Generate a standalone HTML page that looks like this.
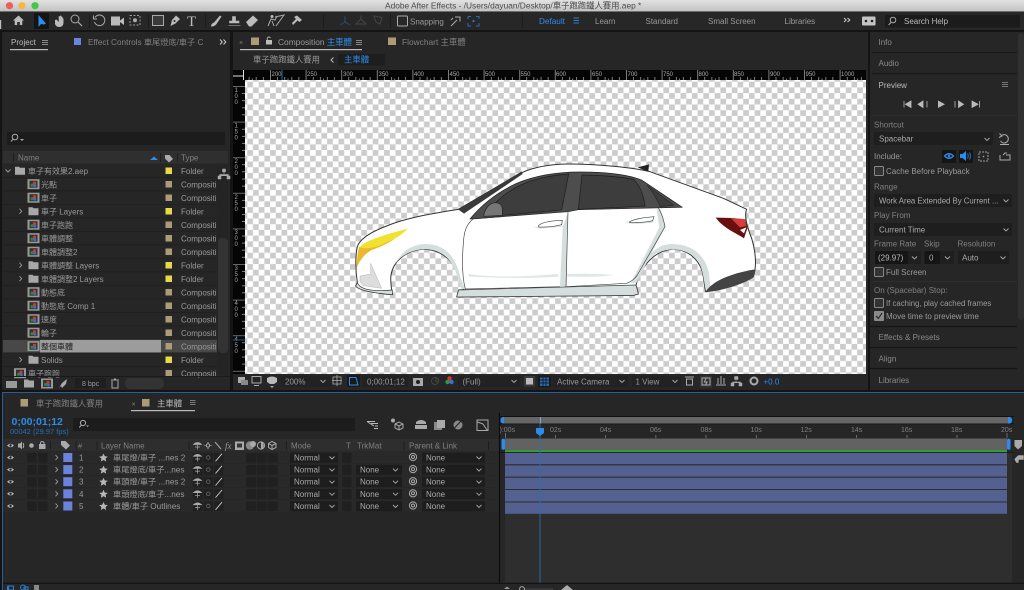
<!DOCTYPE html>
<html><head><meta charset="utf-8"><title>Adobe After Effects</title>
<style>
html,body{margin:0;padding:0;width:1024px;height:590px;overflow:hidden;background:#141414}
svg{display:block;position:absolute;left:0;top:0;filter:blur(.3px)}
text{font-family:"Liberation Sans","Noto Sans CJK TC",sans-serif;font-size:8px;fill:#999}
.b{fill:#2d8ceb}.l{fill:#bbb}.d{fill:#808080}.s{font-size:6px;fill:#aaa}
.i{fill:none;stroke:#aaa;stroke-width:1}.f{fill:#aaa}
.c{fill:none;stroke:#999;stroke-width:.9}
</style></head><body>
<svg width="1024" height="590" viewBox="0 0 1024 590" xmlns="http://www.w3.org/2000/svg">
<defs>
<linearGradient id="tb" x1="0" y1="0" x2="0" y2="1"><stop offset="0" stop-color="#e2e2e2"/><stop offset="1" stop-color="#c2c2c2"/></linearGradient>
<pattern id="chk" x="247.3" y="81.7" width="11.4" height="11.4" patternUnits="userSpaceOnUse"><rect width="11.4" height="11.4" fill="#fff"/><rect width="5.7" height="5.7" fill="#ccc"/><rect x="5.7" y="5.7" width="5.7" height="5.7" fill="#ccc"/></pattern>
<pattern id="rt" x="270" y="70" width="35.6" height="10" patternUnits="userSpaceOnUse"><path d="M.5 0V10M7.6 7V10M14.7 7V10M21.8 7V10M28.9 7V10M18 8.5V10" stroke="#ccc" stroke-width=".6" fill="none"/></pattern>
<pattern id="rl" x="233" y="86" width="12" height="35.6" patternUnits="userSpaceOnUse"><path d="M0 .5H12M9 7.6H12M9 14.7H12M9 21.8H12M9 28.9H12" stroke="#ccc" stroke-width=".6" fill="none"/></pattern>
<g id="cmp"><rect x="0" y="-5" width="12" height="10" fill="#999"/><rect x="2" y="-3.5" width="8" height="7" fill="#333"/><circle cx="7" cy="-1" r="1.6" fill="#d33"/><circle cx="4.6" cy="1" r="1.6" fill="#2a8a3a"/><circle cx="7.4" cy="1.6" r="1.4" fill="#3a6fd8"/></g>
<path id="fld" d="M0 -4H4L5 -3H10V4H0Z" fill="#a8a8a8"/>
<path id="ch" d="M-2.5 -1L0 1.5L2.5 -1" fill="none" stroke="#aaa" stroke-width=".9"/>
<path id="tw" d="M-1 -2.5L1.2 0L-1 2.5" fill="none" stroke="#999" stroke-width=".9"/>
<g id="eye"><path d="M-3.5 0Q0 -3.5 3.5 0Q0 3.5 -3.5 0Z" fill="#bbb"/><circle r="1.2" fill="#222"/></g>
<g id="row">
<rect x="3" y="-6" width="496" height="11.6" fill="#292929"/>
<use href="#eye" x="10.5" y="0"/>
<rect x="27" y="-4.5" width="9.5" height="9.5" fill="#202020"/><rect x="38" y="-4.5" width="9.5" height="9.5" fill="#202020"/>
<use href="#tw" x="56.5" y="0"/>
<rect x="63.3" y="-4.5" width="9" height="9" fill="#6b83dc"/>
<path d="M103.5 -4L104.8 -1.2L107.8 -.9L105.5 1.1L106.2 4L103.5 2.5L100.8 4L101.5 1.1L99.2 -.9L102.2 -1.2Z" fill="#b8b8b8"/>
<rect x="193" y="-4.5" width="9.5" height="9.5" fill="#202020"/><rect x="203.5" y="-4.5" width="9.5" height="9.5" fill="#202020"/><rect x="214" y="-4.5" width="9.5" height="9.5" fill="#202020"/>
<path d="M193.5 -1.2Q197.5 -5 201.5 -1.2ZM197.5 -1V4M195 1.5H200" fill="#aaa" stroke="#aaa" stroke-width=".7"/>
<circle cx="208.3" cy="0" r="1.8" fill="none" stroke="#666" stroke-width=".8"/>
<path d="M215.5 3.8L222 -3.8" stroke="#ccc" stroke-width=".9"/>
<rect x="246" y="-4.5" width="10" height="9.5" fill="#202020"/><rect x="256.8" y="-4.5" width="10" height="9.5" fill="#202020"/><rect x="267.6" y="-4.5" width="10" height="9.5" fill="#202020"/>
<rect x="290" y="-4.8" width="48" height="10" fill="#1d1d1d"/><use href="#ch" x="332" y="0"/>
<rect x="342" y="-4.8" width="9.5" height="10" fill="#202020"/>
<circle cx="413" cy="-.5" r="3.6" class="i"/><circle cx="413" cy="-.5" r="1.5" class="i"/>
<rect x="422" y="-4.8" width="63" height="10" fill="#1d1d1d"/><use href="#ch" x="479" y="0"/>
</g>
<g id="tm"><rect x="356" y="-4.8" width="46" height="10" fill="#1d1d1d"/><use href="#ch" x="395.5" y="0"/></g>
<g id="prow"><path d="M3 6.7H217" stroke="#1e1e1e" stroke-width=".7"/></g>
</defs>

<!-- panels -->
<rect width="1024" height="590" fill="#141414"/>
<rect width="1024" height="11.5" fill="url(#tb)"/>
<circle cx="9.5" cy="5.7" r="3.6" fill="#ee5f57"/><circle cx="22" cy="5.7" r="3.6" fill="#f5b83e"/><circle cx="35" cy="5.7" r="3.6" fill="#3ec949"/>
<text x="385" y="8.5" style="fill:#4a4a4a;font-size:8.35px">Adobe After Effects - /Users/dayuan/Desktop/車子跑跑鐵人賽用.aep *</text>

<rect y="12" width="1024" height="18" fill="#272727"/>
<rect x="2" y="32" width="228" height="358" fill="#262626"/>
<rect x="233" y="32" width="635" height="358" fill="#262626"/>
<rect x="870" y="32" width="154" height="358" fill="#262626"/>
<rect x="1018" y="33" width="6" height="287" rx="3" fill="#303030"/>
<rect x="2" y="392" width="1022" height="198" fill="#262626"/>
<path d="M2.5 590V392.5H1024" fill="none" stroke="#245f98" stroke-width="1"/>
<rect x="0" y="20" width="1.2" height="9" fill="#bbb"/>

<!-- toolbar -->
<path d="M13 20.5L18.5 15.5L24 20.5H22.3V25H19.8V22H17.2V25H14.7V20.5Z" fill="#bbb"/>
<rect x="34" y="13" width="15" height="16" fill="#141414"/>
<path d="M38.5 15V27L41 24L44 24.5L46 23.5Z" fill="#2d8ceb"/>
<path d="M55 20V24Q56 27 59.5 27Q63 27 63.5 23V18.5L62.5 18.3V21.5V16.8L61.3 16.6V21V15.8L60 15.6V21V16.2L58.7 16.2V22L56.5 19.5Z" fill="#bbb"/>
<circle cx="75" cy="19" r="4" class="i"/><path d="M78 22L82 26" stroke="#aaa" stroke-width="1.2"/>
<path d="M95 17.5A5.3 5.3 0 1 1 94.5 22M93.5 15.5V19H97" class="i"/>
<path d="M111 17H120V26H111Z" fill="#bbb" transform="translate(0,-.5)"/><path d="M120 20.5L124 17.5V25L120 22Z" fill="#bbb"/>
<rect x="130" y="15.5" width="10" height="9.5" fill="none" stroke="#999" stroke-dasharray="2 1.5"/><circle cx="135" cy="20.2" r="2" fill="#aaa"/>
<rect x="152.5" y="15.5" width="11" height="10" fill="#3a3a3a" stroke="#aaa"/>
<path d="M170.5 26L172 20L176 15.5L180 19L175.5 23.5Z" fill="#bbb"/><circle cx="174.5" cy="21" r="1" fill="#222"/>
<text x="187" y="26" style="font-family:'Liberation Serif',serif;font-size:15px;fill:#bbb">T</text>
<path d="M211 26.5Q211 23.5 214 22.5L220 15.5L221.5 16.5L216.5 24Q215 26.5 211 26.5Z" fill="#bbb"/>
<path d="M232.5 16.5H235.5V21H239V23H229.5V21H232.5ZM228.5 25.5H240.5" fill="#bbb" stroke="#bbb" stroke-width=".6"/>
<path d="M246 22L253 15.5L258 20L251.5 26.5H249Z" fill="#bbb"/>
<circle cx="272" cy="16.5" r="1.5" fill="#bbb"/><path d="M268 26L271 19L275 20L277 16M272 21L274 26M275 17L284 15L276 26" class="i"/>
<path d="M292 23L296 19L294 17L297 15.5L302 20L299.5 22L297.5 20.5L293 25Z" fill="#bbb"/>
<path d="M345 22V16.5M345 22L340 25M345 22L350 25" stroke="#2f4f70" stroke-width="1" fill="none"/>
<path d="M361 15.5V19M361 19L356 24H366L361 19" stroke="#444" fill="none"/>
<path d="M374 16L382 17.5L380 24L376 22Z" stroke="#444" fill="none"/>
<rect x="397.5" y="16" width="10" height="10" rx="1" fill="none" stroke="#aaa"/>
<text x="410" y="24.3">Snapping</text>
<path d="M451 26L457 20M455 17H460V21.5M453 18L451 20" class="i"/>
<path d="M468 16.5H471M476 16.5H479V19M479 23V26H476M471 26H468V23M468 19V16.5" fill="none" stroke="#2a6fb0"/><circle cx="473.5" cy="21" r="1.2" fill="#2a6fb0"/>
<path d="M89.5 14V28M148.5 14V28M205.5 14V28M323.5 14V28M390.5 14V28M522.5 14V28" stroke="#1c1c1c"/>
<text x="539" y="24" class="b" style="font-size:8.2px">Default</text>
<path d="M573.5 18H579M573.5 20.5H579M573.5 23H579" stroke="#2d7fd0"/>
<text x="595" y="24">Learn</text><text x="645.5" y="24">Standard</text><text x="708" y="24">Small Screen</text><text x="784.5" y="24">Libraries</text>
<path d="M844 18L846.3 20L844 22M847.5 18L849.8 20L847.5 22" class="i" style="stroke:#ccc"/>
<rect x="862" y="16.5" width="13.5" height="9" rx="1" fill="#c4c4c4"/><circle cx="866" cy="21" r="1.3" fill="#222"/><circle cx="872" cy="21" r="1.3" fill="#222"/>
<rect x="885" y="15" width="135" height="12.5" fill="#1b1b1b"/>
<circle cx="893" cy="20" r="2.8" class="i"/><path d="M891 22.5L888.5 25" class="i"/>
<text x="904" y="24" class="l">Search Help</text>

<!-- project tabs -->
<text x="11" y="45" class="l">Project</text>
<rect x="10" y="49" width="38" height="1.2" fill="#bbb"/>
<path d="M42 40.5H48M42 42.5H48M42 44.5H48" stroke="#aaa" stroke-width=".8"/>
<rect x="74" y="38" width="7" height="7" fill="#6b83dc"/>
<text x="88" y="45" class="d" style="font-size:8.2px">Effect Controls 車尾燈底/車子 C</text>
<path d="M220 39.5L222.3 42L220 44.5M223.5 39.5L225.8 42L223.5 44.5" fill="none" stroke="#ccc"/>

<rect x="7" y="132" width="218" height="13" fill="#1c1c1c"/>
<circle cx="15" cy="137" r="2.8" class="i"/><path d="M13 139.3L11 141.5" class="i"/><path d="M20 139H24L22 141Z" class="f"/>
<rect x="3" y="151" width="225" height="12.5" fill="#2f2f2f"/>
<path d="M13.5 153V162M160.5 153V162M177.5 153V162" stroke="#1e1e1e"/>
<text x="18" y="160.5" class="d">Name</text><path d="M150 160H158L154 156.5Z" fill="#2d8ceb"/>
<path d="M165 155H169.5L173 159L169 162.5L165 158.5Z" fill="#aaa"/><text x="181" y="160.5" class="d">Type</text>

<rect x="217" y="165" width="11" height="210" fill="#242424"/>
<rect x="218" y="238" width="10" height="115" rx="4" fill="#333"/>
<path d="M222.5 169H225.5V172H222.5ZM218 176H221V179H218ZM227 176H230V179H227ZM224 172V175M219.5 176V174.5H228.5V176" fill="#aaa" stroke="#aaa" stroke-width=".5"/>

<!-- project rows -->
<g>
<rect x="3" y="339.5" width="214" height="13.5" fill="#484848"/>
<rect x="40" y="339.7" width="121" height="13" fill="#9c9c9c"/>
<use href="#prow" y="170.7"/><use href="#prow" y="184.2"/><use href="#prow" y="197.7"/><use href="#prow" y="211.2"/><use href="#prow" y="224.7"/><use href="#prow" y="238.2"/><use href="#prow" y="251.7"/><use href="#prow" y="265.2"/><use href="#prow" y="278.7"/><use href="#prow" y="292.2"/><use href="#prow" y="305.7"/><use href="#prow" y="319.2"/><use href="#prow" y="332.7"/><use href="#prow" y="346.2"/><use href="#prow" y="359.7"/>
<path d="M5.5 169.5L8 172L10.5 169.5" fill="none" stroke="#999"/>
<use href="#fld" x="15" y="170.7"/>
<use href="#cmp" x="27.5" y="184.2"/><use href="#cmp" x="27.5" y="197.7"/><use href="#tw" x="20.5" y="211.2"/><use href="#fld" x="28.5" y="211.2"/>
<use href="#cmp" x="27.5" y="224.7"/><use href="#cmp" x="27.5" y="238.2"/><use href="#cmp" x="27.5" y="251.7"/>
<use href="#tw" x="20.5" y="265.2"/><use href="#fld" x="28.5" y="265.2"/><use href="#tw" x="20.5" y="278.7"/><use href="#fld" x="28.5" y="278.7"/>
<use href="#cmp" x="27.5" y="292.2"/><use href="#cmp" x="27.5" y="305.7"/><use href="#cmp" x="27.5" y="319.2"/><use href="#cmp" x="27.5" y="332.7"/><use href="#cmp" x="27.5" y="346.2"/>
<use href="#tw" x="20.5" y="359.7"/><use href="#fld" x="28.5" y="359.7"/><use href="#cmp" x="14" y="373.2"/>
<g fill="#e8d84a"><rect x="165.5" y="167.5" width="6.5" height="6.5"/><rect x="165.5" y="208" width="6.5" height="6.5"/><rect x="165.5" y="262" width="6.5" height="6.5"/><rect x="165.5" y="275.5" width="6.5" height="6.5"/><rect x="165.5" y="356.5" width="6.5" height="6.5"/></g>
<g fill="#ad9b78"><rect x="165.5" y="181" width="6.5" height="6.5"/><rect x="165.5" y="194.5" width="6.5" height="6.5"/><rect x="165.5" y="221.5" width="6.5" height="6.5"/><rect x="165.5" y="235" width="6.5" height="6.5"/><rect x="165.5" y="248.5" width="6.5" height="6.5"/><rect x="165.5" y="289" width="6.5" height="6.5"/><rect x="165.5" y="302.5" width="6.5" height="6.5"/><rect x="165.5" y="316" width="6.5" height="6.5"/><rect x="165.5" y="329.5" width="6.5" height="6.5"/><rect x="165.5" y="343" width="6.5" height="6.5"/><rect x="165.5" y="370" width="6.5" height="6.5"/></g>
<text x="28" y="174">車子有效果2.aep</text><text x="181" y="174">Folder</text>
<text x="41" y="187.5">光點</text><text x="181" y="187.5">Compositi</text>
<text x="41" y="201">車子</text><text x="181" y="201">Compositi</text>
<text x="41" y="214.5">車子 Layers</text><text x="181" y="214.5">Folder</text>
<text x="41" y="228">車子跑跑</text><text x="181" y="228">Compositi</text>
<text x="41" y="241.5">車體調整</text><text x="181" y="241.5">Compositi</text>
<text x="41" y="255">車體調整2</text><text x="181" y="255">Compositi</text>
<text x="41" y="268.5">車體調整 Layers</text><text x="181" y="268.5">Folder</text>
<text x="41" y="282">車體調整2 Layers</text><text x="181" y="282">Folder</text>
<text x="41" y="295.5">動態底</text><text x="181" y="295.5">Compositi</text>
<text x="41" y="309">動態底 Comp 1</text><text x="181" y="309">Compositi</text>
<text x="41" y="322.5">速度</text><text x="181" y="322.5">Compositi</text>
<text x="41" y="336">輪子</text><text x="181" y="336">Compositi</text>
<text x="41" y="349.5" style="fill:#1d1d1d">整個車體</text><text x="181" y="349.5">Compositi</text>
<text x="41" y="363">Solids</text><text x="181" y="363">Folder</text>
<text x="28" y="376.5">車子跑跑</text><text x="181" y="376.5">Compositi</text>
</g>
<!-- project bottom -->
<rect x="3" y="376" width="227" height="1" fill="#1a1a1a"/>
<path d="M6 381H17V388H6ZM8 379.5H17" fill="#999"/>
<use href="#fld" x="24" y="383.5"/>
<use href="#cmp" x="41" y="383.5"/>
<path d="M59 388L62 383L67 379L66 384L62 388L61 386Z" fill="#aaa"/>
<rect x="75" y="378" width="31" height="10" fill="#1f1f1f"/><text x="82" y="386" style="font-size:7px">8 bpc</text>
<path d="M111 380H119M112 381V388H118V381M114 379H116" fill="none" stroke="#aaa"/>
<rect x="125" y="378" width="39" height="11" rx="5" fill="#333"/>

<!-- comp tabs -->
<text x="239" y="45" style="font-size:7px" class="d">×</text>
<rect x="251" y="37.5" width="8" height="7.5" fill="#ad9b78"/>
<rect x="266" y="40" width="6" height="4.5" fill="#bbb"/><path d="M267.3 40V38Q269 36 270.5 38" class="i"/>
<text x="278" y="45" style="font-size:8.4px">Composition <tspan class="b">主車體</tspan></text>
<path d="M356 40.5H362M356 42.5H362M356 44.5H362" stroke="#aaa" stroke-width=".8"/>
<rect x="240" y="49" width="122" height="1.2" fill="#bbb"/>
<rect x="388" y="37.5" width="8" height="7.5" fill="#ad9b78"/>
<text x="402" y="45" class="d" style="font-size:8.4px">Flowchart 主車體</text>
<text x="253" y="62.5" style="font-size:8.4px">車子跑跑鐵人賽用</text>
<path d="M333.5 57.5L331 60L333.5 62.5" fill="none" stroke="#bbb"/>
<rect x="338" y="54" width="47" height="11.5" fill="#1e1e1e"/>
<text x="344" y="62.5" class="b" style="font-size:8.4px">主車體</text>

<!-- rulers -->
<rect x="233" y="70" width="633" height="10" fill="#050505"/>
<rect x="233" y="70" width="12" height="304" fill="#050505"/>
<rect x="245" y="70" width="621" height="10" fill="url(#rt)"/>
<rect x="233" y="80" width="12" height="294" fill="url(#rl)"/>
<path d="M233 76H243M243.5 70V80" stroke="#ddd"/>
<path d="M282 70V80" stroke="#2a6fb0"/>
<g class="r">
<text x="271.5" y="76" class="s">200</text><text x="307" y="76" class="s">250</text><text x="343" y="76" class="s">300</text><text x="378.5" y="76" class="s">350</text><text x="414" y="76" class="s">400</text><text x="449.5" y="76" class="s">450</text><text x="485" y="76" class="s">500</text><text x="520.5" y="76" class="s">550</text><text x="556" y="76" class="s">600</text><text x="592" y="76" class="s">650</text><text x="627.5" y="76" class="s">700</text><text x="663" y="76" class="s">750</text><text x="698.5" y="76" class="s">800</text><text x="734" y="76" class="s">850</text><text x="770" y="76" class="s">900</text><text x="805.5" y="76" class="s">950</text><text x="841" y="76" class="s">1000</text>
<text x="234.5" y="92" class="s">1</text><text x="234.5" y="98" class="s">0</text><text x="234.5" y="104" class="s">0</text>
<text x="234.5" y="127.6" class="s">1</text><text x="234.5" y="133.6" class="s">5</text><text x="234.5" y="139.6" class="s">0</text>
<text x="234.5" y="163" class="s">2</text><text x="234.5" y="169" class="s">0</text><text x="234.5" y="175" class="s">0</text>
<text x="234.5" y="199" class="s">2</text><text x="234.5" y="205" class="s">5</text><text x="234.5" y="211" class="s">0</text>
<text x="234.5" y="234" class="s">3</text><text x="234.5" y="240" class="s">0</text><text x="234.5" y="246" class="s">0</text>
<text x="234.5" y="270" class="s">3</text><text x="234.5" y="276" class="s">5</text><text x="234.5" y="282" class="s">0</text>
<text x="234.5" y="305" class="s">4</text><text x="234.5" y="311" class="s">0</text><text x="234.5" y="317" class="s">0</text>
<text x="234.5" y="341" class="s">4</text><text x="234.5" y="347" class="s">5</text><text x="234.5" y="353" class="s">0</text>
</g>
<path d="M233 340H245" stroke="#2a6fb0" opacity=".8"/>

<!-- canvas -->
<rect x="245" y="80" width="621" height="294" fill="url(#chk)"/>

<!-- car -->
<svg x="340" y="150" width="430" height="160" viewBox="0 0 1290 480" style="filter:none">
<path d="M355 178C290 188 200 203 140 228C95 245 60 265 52 290C46 315 46 360 52 398L47 408C55 420 90 428 157 434C155 415 150 395 153 375C160 335 195 303 245 298C295 296 335 325 350 365C358 385 362 400 372 418L356 420L350 441L880 436L895 432C893 420 890 412 888 405C905 345 945 302 995 298C1040 296 1075 325 1087 365C1092 385 1093 410 1097 425C1140 422 1215 400 1240 380C1250 350 1248 310 1235 265C1225 240 1210 200 1220 178L1150 145L930 65C880 52 770 42 680 42C630 43 585 50 545 68Z" fill="#fff" stroke="#333" stroke-width="3" stroke-linejoin="round"/>
<path d="M165 345C185 300 220 282 260 282C310 285 345 310 362 385L375 416L365 418C355 390 345 345 320 322C295 298 255 293 225 302C195 310 175 325 165 345Z" fill="#d4dfdd"/>
<path d="M892 395C900 340 940 285 990 282C1050 280 1095 310 1107 370L1112 420L1098 423C1090 390 1090 340 1060 318C1030 295 985 292 950 310C920 328 900 365 892 395Z" fill="#d4dfdd"/>
<path d="M356 420L888 405L895 432L880 436L350 441Z" fill="#d4dfdd" stroke="#444" stroke-width="2" stroke-linejoin="round"/>
<path d="M668 232L684 185L680 410L660 408Z" fill="#d4dfdd"/>
<path d="M950 178L962 178L976 228L890 398L872 400L958 232Z" fill="#d4dfdd"/>
<path d="M385 372C470 385 570 378 655 372V380C570 386 470 384 388 380Z" fill="#dfe7e5"/>
<path d="M682 372C730 370 780 372 822 375C780 382 730 380 682 380Z" fill="#dfe7e5"/>
<path d="M398 208C378 225 372 245 370 280C366 330 366 380 376 417L660 410" fill="none" stroke="#444" stroke-width="2"/>
<path d="M684 185L678 410L860 400C875 395 885 385 892 375L975 230C970 205 965 190 950 165" fill="none" stroke="#444" stroke-width="2"/>
<path d="M390 207C420 170 465 130 530 100C590 75 660 66 720 66C790 66 860 72 905 90L1027 172L715 179L684 185Z" fill="#4d4d4d" stroke="#222" stroke-width="2" stroke-linejoin="round"/>
<path d="M465 160C500 125 540 100 600 85C630 78 660 74 686 72L665 180L488 196Z" fill="#3d3d3d" stroke="#1d1d1d" stroke-width="2"/>
<path d="M726 75C780 76 840 80 880 88C900 105 912 140 915 168L715 178Z" fill="#3d3d3d" stroke="#1d1d1d" stroke-width="2"/>
<path d="M921 105L1002 166L960 170C950 145 935 122 921 105Z" fill="#3d3d3d" stroke="#1d1d1d" stroke-width="1.5"/>
<path d="M432 192C438 172 450 160 465 158C478 158 487 165 487 180V196L432 199Z" fill="#777" stroke="#222" stroke-width="2"/>
<path d="M404 206L488 196V201L395 208Z" fill="#333"/>
<path d="M355 178L545 65L547 72L372 190Z" fill="#3a3a3a" stroke="#222" stroke-width="1"/>
<path d="M893 52L927 43L925 65L908 58Z" fill="#222"/>
<path d="M580 232L660 228L668 225V230L600 236Z" fill="#d4dfdd"/>
<path d="M595 228C605 215 640 212 667 211L665 224C640 230 615 232 597 231Z" fill="#fff" stroke="#444" stroke-width="2"/>
<path d="M852 218L940 212V218L880 222Z" fill="#d4dfdd"/>
<path d="M868 216C885 205 915 202 942 200L938 212C915 218 890 218 870 218Z" fill="#fff" stroke="#444" stroke-width="2"/>
<path d="M50 352C50 325 55 295 65 285C95 265 150 250 204 236C175 265 130 285 95 300C75 310 60 330 50 352Z" fill="#f0e22e"/>
<path d="M50 352C50 330 53 305 58 290C70 298 85 295 110 290C125 285 145 275 165 266C145 280 120 292 95 300C75 310 60 330 50 352Z" fill="#edb92c"/>
<path d="M60 378L92 372L92 340L125 415L70 407L60 395Z" fill="#ddd" stroke="#999" stroke-width="1"/>
<path d="M1127 203L1178 204L1216 208L1222 235L1212 265C1190 250 1150 235 1127 203Z" fill="#681010"/>
<path d="M1172 204L1216 208L1218 228L1200 232Z" fill="#d93b3b"/>
<path d="M1200 240L1219 232L1212 250Z" fill="#fff"/>
<path d="M1097 425C1115 395 1170 370 1245 358C1245 370 1243 375 1240 382C1210 402 1150 420 1097 425Z" fill="#444"/>
<path d="M52 398C60 420 100 425 157 420V434C90 428 55 420 47 408Z" fill="#d4dfdd" stroke="#333" stroke-width="2"/>
</svg>

<!-- viewer bar -->
<rect x="233" y="374" width="635" height="16" fill="#262626"/>
<rect x="238" y="377" width="7" height="6" fill="#aaa"/><rect x="241" y="380" width="7" height="5" fill="#888"/>
<rect x="252" y="376.5" width="9" height="6.5" class="i"/><path d="M254 385.5H259" class="i"/>
<path d="M267 378Q272 375 277 378V382L274 384H270L267 382Z" fill="#bbb"/><path d="M270 386H274L272 388Z" class="f"/>
<rect x="281" y="376" width="50" height="11" fill="#222"/>
<text x="285" y="384.5" style="font-size:8px">200%</text><use href="#ch" x="323" y="381"/>
<path d="M337 375V386M332 380.5H342M333 377H341V384H333Z" fill="none" stroke="#aaa" stroke-width=".8"/>
<rect x="347" y="375" width="13" height="12" fill="#1a1a1a"/>
<path d="M349.5 385V377.5H356L358 385Z" fill="none" stroke="#2d8ceb"/>
<rect x="362" y="376" width="46" height="11" fill="#222"/>
<text x="367" y="384.5">0;00;01;12</text>
<path d="M413 378H423V386H413Z" fill="#aaa"/><circle cx="418" cy="382" r="2" fill="#222"/>
<circle cx="435" cy="381" r="3.5" fill="none" stroke="#444"/><circle cx="437" cy="380" r="1.5" fill="none" stroke="#444"/>
<circle cx="449.5" cy="378.5" r="2.2" fill="#d33"/><circle cx="447.5" cy="382" r="2.2" fill="#2a9a3a"/><circle cx="451.5" cy="382" r="2.2" fill="#3a6fd8"/>
<rect x="458" y="376" width="62" height="11" fill="#222"/>
<text x="462.5" y="384.5">(Full)</text><use href="#ch" x="514" y="381"/>
<rect x="524" y="376" width="11" height="10.5" fill="#3a3a3a"/><rect x="526" y="378" width="7" height="6.5" fill="#bbb"/>
<rect x="538" y="375.5" width="13" height="12" fill="#1a1a1a"/>
<rect x="540" y="377.5" width="9" height="8.5" fill="#2b6cb0"/><path d="M540 380H549M540 383H549M543 377.5V386M546 377.5V386" stroke="#123"/>
<rect x="553" y="376" width="75" height="11" fill="#222"/>
<text x="557" y="384.5">Active Camera</text><use href="#ch" x="622" y="381"/>
<rect x="632" y="376" width="49" height="11" fill="#222"/>
<text x="635.5" y="384.5">1 View</text><use href="#ch" x="675" y="381"/>
<path d="M685 377H694M686.5 379H692.5V385H686.5Z" class="i"/>
<rect x="700" y="375.5" width="12" height="12" fill="#333"/><path d="M702 378H710V385H702ZM706 378L704.5 382H707L705.5 385" class="i"/>
<path d="M716 385H726M718 378V384M721 376V384M724 378V384" class="i"/>
<path d="M734.5 376.5H738V379.5H734.5ZM731 383H734V386H731ZM739 383H742V386H739ZM736 380V382M732.5 383V382H740.5V383" fill="#aaa" stroke="#aaa" stroke-width=".5"/>
<circle cx="754" cy="381" r="3.5" fill="none" stroke="#aaa" stroke-width="2"/>
<text x="763.5" y="384.5" class="b">+0.0</text>

<!-- right panel -->
<text x="878.5" y="45" class="d" style="fill:#8a8a8a">Info</text><path d="M872 52.5H1017M872 73.5H1017" stroke="#1a1a1a" stroke-width="1.2"/>
<text x="878.5" y="66" class="d" style="fill:#8a8a8a">Audio</text>
<text x="878.5" y="88" class="l">Preview</text>
<path d="M1002 82.5H1008M1002 84.5H1008M1002 86.5H1008" stroke="#777" stroke-width=".9"/>
<path d="M904 101V107.5M911 101V107.5L905.5 104.2Z" fill="#bbb" stroke="#bbb" stroke-width=".8"/>
<path d="M923 101V107.5L918 104.2ZM927 101V107.5" fill="#bbb" stroke="#bbb" stroke-width=".8"/>
<path d="M938 100.5L945 104.2L938 108Z" fill="#bbb"/>
<path d="M955 101V107.5M958.5 101V107.5L963.5 104.2Z" fill="#bbb" stroke="#bbb" stroke-width=".8"/>
<path d="M972 101V107.5L978 104.2ZM979.5 101V107.5" fill="#bbb" stroke="#bbb" stroke-width=".8"/>
<path d="M872 115.5H1017" stroke="#2e2e2e"/>
<text x="874" y="127.5" class="d">Shortcut</text>
<rect x="874" y="132" width="119" height="13" fill="#1e1e1e"/><text x="879" y="141.5" class="l" style="fill:#aaa">Spacebar</text><use href="#ch" x="987" y="139"/>
<path d="M1001 136A4.2 4.2 0 1 1 1000.5 141M999.5 133.5L1002 136L999 137.5M1000 144.5H1009" class="i"/>
<text x="874" y="159">Include:</text>
<rect x="942" y="150" width="14" height="13" fill="#151515"/><path d="M944.5 156Q949 151.5 953.5 156Q949 160.5 944.5 156Z" fill="none" stroke="#2d8ceb" stroke-width="1.3"/><circle cx="949" cy="156" r="1.2" fill="#2d8ceb"/>
<rect x="959" y="150" width="14" height="13" fill="#151515"/><path d="M960 154H962.5L966 151V161L962.5 158H960Z" fill="#2d8ceb"/><path d="M967.5 153.5Q969 156 967.5 158.5M969.5 152.5Q971.5 156 969.5 159.5" fill="none" stroke="#2d8ceb" stroke-width=".8"/>
<rect x="979" y="152" width="9" height="9" fill="none" stroke="#999" stroke-dasharray="2 1"/><circle cx="983.5" cy="156.5" r=".8" class="f"/>
<path d="M1000 155V160H1010V155H1006M1003 155L1005 153H1007" class="i"/>
<rect x="874.5" y="166.5" width="9" height="9" rx="1" fill="#333" stroke="#888"/>
<text x="886" y="174">Cache Before Playback</text>
<text x="874" y="189.5" class="d">Range</text>
<rect x="874" y="194" width="138" height="13" fill="#1e1e1e"/><text x="879" y="203.5" style="fill:#aaa;font-size:7.8px">Work Area Extended By Current ...</text><use href="#ch" x="1006" y="200.5"/>
<text x="874" y="218" class="d">Play From</text>
<rect x="874" y="223" width="138" height="13" fill="#1e1e1e"/><text x="879" y="232.5" style="fill:#aaa">Current Time</text><use href="#ch" x="1006" y="229.5"/>
<text x="874" y="246.5" class="d">Frame Rate</text><text x="924" y="246.5" class="d">Skip</text><text x="957.5" y="246.5" class="d">Resolution</text>
<rect x="875" y="251" width="33" height="13" fill="#151515"/><rect x="908" y="251" width="13" height="13" fill="#1f1f1f"/><text x="878" y="260.5" class="l">(29.97)</text><use href="#ch" x="914.5" y="257.5"/>
<rect x="924.5" y="251" width="16" height="13" fill="#151515"/><rect x="941" y="251" width="13" height="13" fill="#1f1f1f"/><text x="929" y="260.5" style="fill:#aaa">0</text><use href="#ch" x="947.5" y="257.5"/>
<rect x="958" y="251" width="51" height="13" fill="#1e1e1e"/><text x="962" y="260.5" style="fill:#aaa">Auto</text><use href="#ch" x="1003" y="257.5"/>
<rect x="874.5" y="267.5" width="9" height="9" rx="1" fill="#333" stroke="#888"/>
<text x="886" y="275">Full Screen</text>
<path d="M872 281.5H1017" stroke="#2e2e2e"/>
<text x="874" y="293" class="d">On (Spacebar) Stop:</text>
<rect x="874.5" y="298.5" width="9" height="9" rx="1" fill="#333" stroke="#888"/>
<text x="886" y="306" style="font-size:7.8px">If caching, play cached frames</text>
<rect x="874" y="311" width="10" height="10" rx="1" fill="#8a8a8a"/><path d="M876 316L878.3 318.5L882 313" fill="none" stroke="#222" stroke-width="1.1"/>
<text x="886" y="319">Move time to preview time</text>
<path d="M870 326.5H1017M870 347.5H1017M870 368.5H1017" stroke="#161616" stroke-width="1.2"/>
<text x="878.5" y="340" class="d" style="fill:#8a8a8a">Effects &amp; Presets</text>
<text x="878.5" y="361.5" class="d" style="fill:#8a8a8a">Align</text>
<text x="878.5" y="383" class="d" style="fill:#8a8a8a">Libraries</text>

<!-- timeline tabs -->
<rect x="20.5" y="399" width="7.5" height="7.5" fill="#ad9b78"/>
<text x="36" y="406.5" class="d" style="font-size:8.4px">車子跑跑鐵人賽用</text>
<text x="131.5" y="406.5" class="d" style="font-size:7px">×</text>
<rect x="142" y="399" width="7.5" height="7.5" fill="#ad9b78"/>
<text x="157" y="406.5" class="l" style="font-size:8.4px">主車體</text>
<path d="M190 400.5H195.5M190 402.5H195.5M190 404.5H195.5" stroke="#999" stroke-width=".8"/>
<rect x="131" y="410" width="64" height="1.2" fill="#bbb"/>
<text x="11.5" y="425" class="b" style="font-size:10.5px;font-weight:bold">0;00;01;12</text>
<text x="10" y="434" style="font-size:7.5px;fill:#2470b8">00042 (29.97 fps)</text>
<rect x="73" y="418" width="282" height="13" fill="#1c1c1c"/>
<circle cx="83" cy="423" r="2.6" class="i"/><path d="M81.2 425.2L79.3 427.5" class="i"/><path d="M86 425.5H89L87.5 427Z" class="f"/>
<path d="M367 421.5H375M371 423.5H378M375 426H378M374 428.5H378M367 421.5L374 426" fill="none" stroke="#bbb" stroke-width="1"/>
<circle cx="393" cy="420.5" r="2" class="f"/><path d="M395 424L399 422L403 424V428L399 430L395 428Z M395 424L399 426L403 424M399 426V430" class="i"/>
<path d="M416 422Q421 418 426 422V424H416ZM415 425H427V429H415Z" fill="#aaa"/>
<rect x="434" y="422" width="8" height="8" fill="#888"/><rect x="437" y="420" width="8" height="8" fill="#aaa"/>
<circle cx="458" cy="425" r="4.5" fill="#888"/><path d="M454.5 428L461 421" stroke="#222"/>
<rect x="477" y="420" width="11" height="10.5" class="i"/><path d="M477.5 422L483 424L487 430" class="i"/>

<!-- timeline header -->
<rect x="3" y="439" width="496" height="12.5" fill="#2e2e2e"/>
<path d="M3 451.8H500" stroke="#111" stroke-width=".9"/>
<use href="#eye" x="10.5" y="445.5"/>
<path d="M18 443.5H20L22 441.5V449.5L20 447.5H18Z" fill="#aaa"/><path d="M23 443Q24.5 445.5 23 448" class="i"/>
<circle cx="31.5" cy="445.5" r="2.3" fill="#aaa"/>
<rect x="39" y="444" width="6.5" height="5" class="f"/><path d="M40.5 444V442.5Q42.2 440.5 44 442.5V444" class="i"/>
<path d="M50.5 441V450M76 441V450M97 441V450M189 441V450M286.5 441V450M404 441V450M488.5 441V450" stroke="#1f1f1f"/>
<path d="M61 441H65.5L70 445.5L66 449.5L61 445Z" fill="#aaa"/>
<text x="78" y="448.5" class="d" style="font-size:7.5px">#</text>
<text x="101" y="448.5" class="d">Layer Name</text>
<path d="M193.5 444.5Q197.5 440.5 201.5 444.5ZM197.5 445V449.5M195 447H200" fill="#aaa" stroke="#aaa" stroke-width=".7"/>
<circle cx="208" cy="445.5" r="1.7" class="i"/><path d="M208 442V443M208 448V449M204.5 445.5H205.5M210.5 445.5H211.5" class="i"/>
<path d="M215 442L221 449" class="i"/>
<text x="225" y="449" style="font-family:'Liberation Serif',serif;font-style:italic;font-size:9px">fx</text>
<rect x="235" y="441.5" width="9" height="8.5" fill="#aaa"/><rect x="237" y="443.5" width="5" height="4" fill="#333"/>
<circle cx="250" cy="445.5" r="4.2" fill="#888"/><circle cx="253" cy="444" r="3" fill="#aaa"/>
<circle cx="261" cy="445.5" r="3.6" class="i"/><path d="M261 442A3.6 3.6 0 0 1 261 449Z" class="f"/>
<path d="M268.5 443.5L272 441.5L276 443.5V447.5L272 449.5L268.5 447.5ZM268.5 443.5L272 445.5L276 443.5M272 445.5V449.5" class="i"/>
<text x="291" y="448.5" class="d">Mode</text><text x="346" y="448.5" class="d">T</text><text x="357" y="448.5" class="d">TrkMat</text><text x="409" y="448.5" class="d">Parent &amp; Link</text>

<!-- timeline rows -->
<use href="#row" y="457.5"/><use href="#row" y="469.6"/><use href="#row" y="481.7"/><use href="#row" y="493.8"/><use href="#row" y="506"/>
<use href="#tm" y="469.6"/><use href="#tm" y="481.7"/><use href="#tm" y="493.8"/><use href="#tm" y="506"/>
<text x="79" y="460.5">1</text><text x="113" y="460.5" style="font-size:8.2px">車尾燈/車子 ...nes 2</text><text x="294" y="460.5" style="fill:#aaa">Normal</text><text x="426" y="460.5" style="fill:#aaa">None</text>
<text x="79" y="472.6">2</text><text x="113" y="472.6" style="font-size:8.2px">車尾燈底/車子...nes</text><text x="294" y="472.6" style="fill:#aaa">Normal</text><text x="360" y="472.6" style="fill:#aaa">None</text><text x="426" y="472.6" style="fill:#aaa">None</text>
<text x="79" y="484.7">3</text><text x="113" y="484.7" style="font-size:8.2px">車頭燈/車子 ...nes 2</text><text x="294" y="484.7" style="fill:#aaa">Normal</text><text x="360" y="484.7" style="fill:#aaa">None</text><text x="426" y="484.7" style="fill:#aaa">None</text>
<text x="79" y="496.8">4</text><text x="113" y="496.8" style="font-size:8.2px">車頭燈底/車子...nes</text><text x="294" y="496.8" style="fill:#aaa">Normal</text><text x="360" y="496.8" style="fill:#aaa">None</text><text x="426" y="496.8" style="fill:#aaa">None</text>
<text x="79" y="509">5</text><text x="113" y="509" style="font-size:8.2px">車體/車子 Outlines</text><text x="294" y="509" style="fill:#aaa">Normal</text><text x="360" y="509" style="fill:#aaa">None</text><text x="426" y="509" style="fill:#aaa">None</text>

<!-- timeline graph -->
<rect x="499" y="416" width="525" height="167" fill="#262626"/>
<rect x="505" y="452" width="507" height="131" fill="#2e2e2e"/>
<path d="M499.5 413V583" stroke="#0c0c0c" stroke-width="1.2"/>
<path d="M499 416.5H1014M499 423.8H1014" stroke="#111"/>
<rect x="504" y="417" width="504" height="6.5" fill="#666"/>
<path d="M504 417A3 3 0 0 0 500.5 420.2A3 3 0 0 0 504 423.5ZM1008 417A3 3 0 0 1 1012 420.2A3 3 0 0 1 1008 423.5Z" fill="#2d8ceb"/>
<g class="tl">
<text x="499.5" y="432" style="font-size:7px" class="d">):00s</text><text x="550" y="432" style="font-size:7px" class="d">02s</text><text x="600" y="432" style="font-size:7px" class="d">04s</text><text x="650" y="432" style="font-size:7px" class="d">06s</text><text x="700.5" y="432" style="font-size:7px" class="d">08s</text><text x="750.5" y="432" style="font-size:7px" class="d">10s</text><text x="800.5" y="432" style="font-size:7px" class="d">12s</text><text x="851" y="432" style="font-size:7px" class="d">14s</text><text x="901" y="432" style="font-size:7px" class="d">16s</text><text x="951" y="432" style="font-size:7px" class="d">18s</text><text x="1001" y="432" style="font-size:7px" class="d">20s</text>
</g>
<path d="M505.5 433V438M555.5 435V438M605.7 435V438M655.9 435V438M706 435V438M756.3 435V438M806.5 435V438M856.7 435V438M907 435V438M957 435V438M1007 433V438" stroke="#888" stroke-width=".7"/>
<rect x="505" y="438.5" width="502" height="12" fill="#626262"/>
<rect x="501.5" y="438.7" width="3.5" height="11" rx="1.5" fill="#2d8ceb"/><rect x="1007" y="438.7" width="3.5" height="11" rx="1.5" fill="#2d8ceb"/>
<rect x="505" y="450.4" width="502" height="1.8" fill="#2aaa2a"/>
<path d="M499 452.3H1014" stroke="#111" stroke-width=".7"/>
<g fill="#54608f"><rect x="505" y="452.8" width="502" height="11.4"/><rect x="505" y="465.4" width="502" height="11.2"/><rect x="505" y="477.7" width="502" height="11.3"/><rect x="505" y="490" width="502" height="11.5"/><rect x="505" y="502.5" width="502" height="11.3"/></g>
<path d="M540 423V583" stroke="#2a6fb0" stroke-width=".9"/>
<path d="M536 428H544V433L540 436L536 433Z" fill="#2d8ceb"/>
<rect x="540" y="417" width="1" height="6.5" fill="#88a8c8"/>
<path d="M1014.5 440H1022V446L1018 449.5L1014.5 446Z" fill="#aaa"/>
<path d="M1014 459L1018 455H1024V460H1019V463H1016Z" fill="#aaa" stroke="#222" stroke-width=".6"/>

<!-- bottom bar -->
<path d="M3 583.3H500M500 583.3H1024" stroke="#0e0e0e" stroke-width="1"/>
<path d="M7.5 586V590M7.5 586H13" stroke="#2d7fd0" fill="none"/><rect x="8.5" y="586" width="5" height="4" fill="none" stroke="#2d7fd0"/>
<circle cx="23" cy="587.5" r="2.5" fill="none" stroke="#2d7fd0"/><rect x="24" y="587" width="4" height="3" fill="none" stroke="#2d7fd0"/>
<rect x="34" y="585" width="5" height="5" fill="#888"/>
<path d="M504 589L507 586.5L510 589Z" fill="#999"/><circle cx="522" cy="589" r="2.4" class="i"/><rect x="525" y="588.5" width="28" height="1.2" fill="#444"/>
<path d="M561 590L567 585L573 590Z" fill="#aaa"/>
</svg>
</body></html>
